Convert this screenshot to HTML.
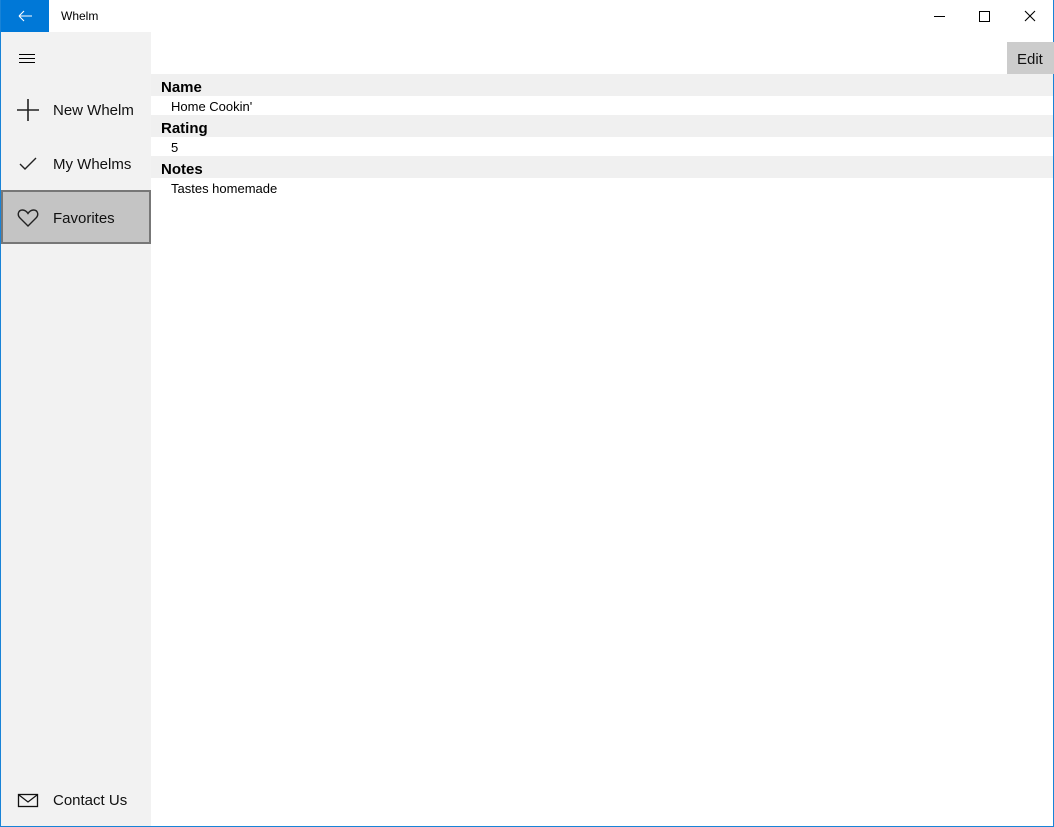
<!DOCTYPE html>
<html><head><meta charset="utf-8"><style>
*{margin:0;padding:0;box-sizing:border-box}
body{width:1054px;height:827px;position:relative;background:#fff;font-family:"Liberation Sans","DejaVu Sans",sans-serif;overflow:hidden;color:#000}
.frame{position:absolute;left:0;top:0;width:1054px;height:827px;border:1px solid #1883d7;border-top:none}
.back{position:absolute;left:1px;top:0;width:48px;height:32px;background:#0078d7}
.title{position:absolute;left:61px;top:9px;font-size:12px}
.side{position:absolute;left:1px;top:32px;width:150px;height:794px;background:#f2f2f2}
.item{position:absolute;left:0;width:150px;height:54px;font-size:15px;color:#111}
.item span{position:absolute;left:52px;top:20px}
.item svg{position:absolute;left:16px;top:17px}
.sel{background:#c4c4c4;border:2px solid #777}
.edit{position:absolute;left:1007px;top:42px;width:47px;height:32px;background:#ccc;font-size:15px;padding:9px 0 0 10px;color:#111}
.hdr{position:absolute;left:151px;width:902px;height:22px;background:#f0f0f0;font-weight:bold;font-size:15px;padding:5px 0 0 10px;line-height:17px}
.val{position:absolute;left:171px;font-size:13px}
</style></head><body>
<div class="frame"></div>
<div class="back"><svg width="48" height="32"><path d="M18 16H31M18 16L23 11M18 16L23 21" stroke="#fff" stroke-width="1.1" fill="none"/></svg></div>
<div class="title">Whelm</div>
<svg style="position:absolute;left:920px;top:0" width="130" height="32"><path d="M14 16.5H25" stroke="#000" stroke-width="1"/><rect x="59.5" y="11.5" width="10" height="10" fill="none" stroke="#000"/><path d="M105 11L115 21M115 11L105 21" stroke="#000" stroke-width="1.1"/></svg>
<div class="side">
<svg style="position:absolute;left:18px;top:21px" width="16" height="12"><path d="M0 1.5H16M0 5.5H16M0 9.5H16" stroke="#000" stroke-width="0.9"/></svg>
<div class="item" style="top:50px"><svg width="22" height="22"><path d="M11 0V22M0 11H22" stroke="#222" stroke-width="1.6"/></svg><span>New Whelm</span></div>
<div class="item" style="top:104px"><svg width="22" height="22"><path d="M3 11L8 16L19 5" stroke="#222" stroke-width="1.4" fill="none"/></svg><span>My Whelms</span></div>
<div class="item sel" style="top:158px"><svg width="22" height="22" style="left:14px;top:15px"><path d="M11 19L3 11C0 8 1 3 5.5 3C8 3 10 5 11 6.5C12 5 14 3 16.5 3C21 3 22 8 19 11Z" stroke="#222" stroke-width="1.4" fill="none"/></svg><span style="left:50px;top:18px">Favorites</span></div>
<div class="item" style="top:740px"><svg width="22" height="22" style="top:19px"><rect x="1.5" y="3.5" width="19" height="12" fill="none" stroke="#111" stroke-width="1.3"/><path d="M2 4L11 11L20 4" stroke="#111" stroke-width="1.2" fill="none"/></svg><span>Contact Us</span></div>
</div>
<div class="edit">Edit</div>
<div class="hdr" style="top:74px">Name</div>
<div class="val" style="top:99px">Home Cookin'</div>
<div class="hdr" style="top:115px">Rating</div>
<div class="val" style="top:140px">5</div>
<div class="hdr" style="top:156px">Notes</div>
<div class="val" style="top:181px">Tastes homemade</div>
</body></html>
